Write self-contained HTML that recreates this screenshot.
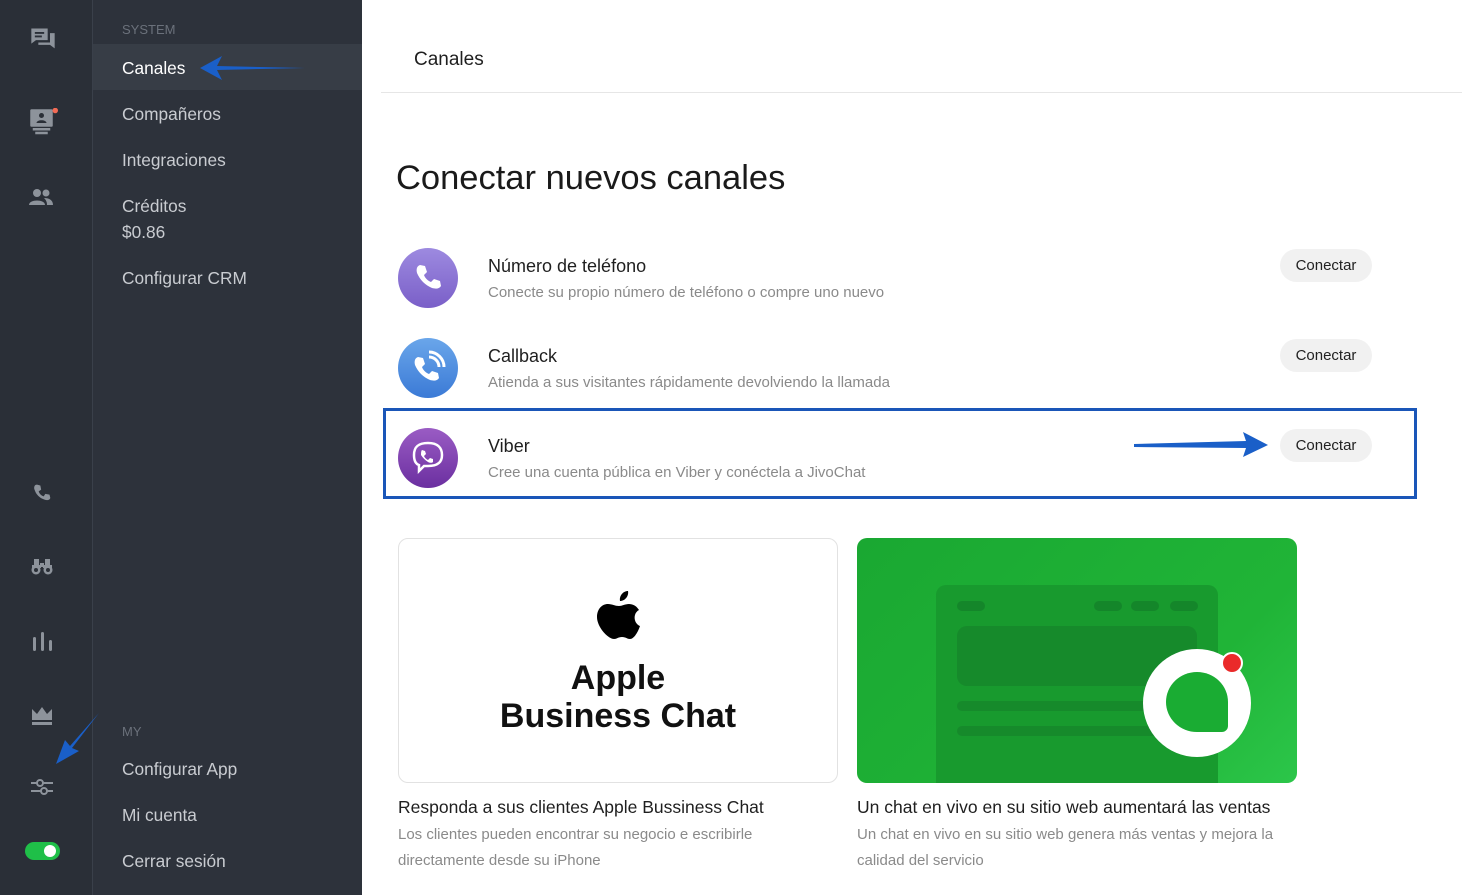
<!DOCTYPE html>
<html><head><meta charset="utf-8"><style>
*{margin:0;padding:0;box-sizing:border-box}
body{width:1462px;height:895px;overflow:hidden;font-family:"Liberation Sans",sans-serif;background:#fff;position:relative}
.rail{position:absolute;left:0;top:0;width:92px;height:895px;background:#2a2f37}
.menu{position:absolute;left:92px;top:0;width:270px;height:895px;background:#2d323b;border-left:1px solid #3a404a}
.menu .it{position:absolute;left:29px;color:#c9ccd1;font-size:17.3px}
.menu .sec{position:absolute;left:29px;color:#6b717b;font-size:13px}
.act{position:absolute;left:0;top:44px;width:269px;height:46px;background:#373d46}
.ic{position:absolute;left:29px}
.a{position:absolute;font-size:18px;color:#1f1f1f}
.s{position:absolute;font-size:15px;color:#8a8a8a}
.btn{position:absolute;left:1280px;width:92px;height:33px;border-radius:17px;background:#f1f1f1;font-size:15px;color:#222;text-align:center;line-height:33px}
.circ{position:absolute;left:398px;width:60px;height:60px;border-radius:50%}
</style></head><body>
<div class="rail">
<svg class="ic" style="top:25px" width="28" height="28" viewBox="0 0 24 24" fill="#8d939b"><path d="M2 3h14v10H6l-4 3z"/><path d="M18 7h4v13l-4-3H8v-2h10z"/><rect x="5" y="6" width="8" height="1.6" fill="#2a2f37"/><rect x="5" y="9" width="6" height="1.6" fill="#2a2f37"/></svg>
<svg class="ic" style="top:108px" width="30" height="30" viewBox="0 0 24 24"><rect x="1" y="1" width="18" height="14" rx="1" fill="#8d939b"/><circle cx="10" cy="6" r="2" fill="#2a2f37"/><path d="M6 12c0-3 8-3 8 0z" fill="#2a2f37"/><rect x="3" y="16" width="14" height="2" fill="#8d939b"/><rect x="5" y="19" width="10" height="2" fill="#8d939b"/><circle cx="21" cy="2" r="2.2" fill="#f26b55"/></svg>
<svg class="ic" style="top:188px" width="24" height="20" viewBox="0 0 24 20" fill="#8d939b"><circle cx="8" cy="5" r="4"/><circle cx="17" cy="5" r="3.5"/><path d="M0 17c0-6 16-6 16 0z"/><path d="M15 10c5 0 9 2 9 7h-6c0-3-1-5-3-7z"/></svg>
<svg class="ic" style="top:483px;left:32px" width="20" height="20" viewBox="0 0 24 24" fill="#8d939b"><path d="M6 2l4 1 1 5-3 2c1 3 3 5 6 6l2-3 5 1 1 4c-1 3-4 3-7 2C9 18 5 14 3 8 2 5 3 2 6 2z"/></svg>
<svg class="ic" style="top:557px;left:31px" width="22" height="18" viewBox="0 0 22 18" fill="#8d939b"><path d="M3 2h5v6H3zM14 2h5v6h-5zM1 8h9v3H1zM12 8h9v3h-9z"/><circle cx="5" cy="13" r="4.5"/><circle cx="17" cy="13" r="4.5"/><circle cx="5" cy="13" r="2" fill="#2a2f37"/><circle cx="17" cy="13" r="2" fill="#2a2f37"/><rect x="9" y="6" width="4" height="4"/></svg>
<svg class="ic" style="top:632px;left:32px" width="22" height="20" fill="#8d939b"><rect x="1" y="5" width="3" height="14" rx="1.5"/><rect x="9" y="0" width="3" height="19" rx="1.5"/><rect x="17" y="8" width="3" height="11" rx="1.5"/></svg>
<svg class="ic" style="top:707px;left:32px" width="20" height="18" fill="#8d939b"><path d="M0 2l5 5 5-7 5 7 5-5v11H0z"/><rect y="15" width="20" height="3"/></svg>
<svg class="ic" style="top:777px;left:31px" width="22" height="20" fill="none" stroke="#8d939b" stroke-width="2"><path d="M0 6h6M12 6h10M0 14h10M16 14h6"/><circle cx="9" cy="6" r="3"/><circle cx="13" cy="14" r="3"/></svg>
<div style="position:absolute;left:25px;top:842px;width:35px;height:18px;border-radius:9px;background:#1fbf48"></div>
<div style="position:absolute;left:44px;top:845px;width:12px;height:12px;border-radius:50%;background:#fff"></div>
</div>
<div class="menu">
<div class="sec" style="top:22px">SYSTEM</div>
<div class="act"></div>
<div class="it" style="top:58px;color:#fff">Canales</div>
<div class="it" style="top:104px">Compañeros</div>
<div class="it" style="top:150px">Integraciones</div>
<div class="it" style="top:196px">Créditos</div>
<div class="it" style="top:222px">$0.86</div>
<div class="it" style="top:268px">Configurar CRM</div>
<div class="sec" style="top:724px">MY</div>
<div class="it" style="top:759px">Configurar App</div>
<div class="it" style="top:805px">Mi cuenta</div>
<div class="it" style="top:851px">Cerrar sesión</div>
</div>
<svg style="position:absolute;left:0;top:0" width="1462" height="895"><path d="M200 68l22-12-5 10 88 2-88 2 5 10z" fill="#1a5fc8"/><path d="M99 713L72 748l7 3-23 13 9-24 5 6z" fill="#1a5fc8"/><path d="M1134 444l112-3-3-9 25 13-25 12 3-9-112-1z" fill="#1a5fc8"/></svg>
<div style="position:absolute;left:414px;top:49px;font-size:19px;color:#1f1f1f">Canales</div>
<div style="position:absolute;left:381px;top:92px;width:1081px;height:1px;background:#e6e6e6"></div>
<div style="position:absolute;left:396px;top:159px;font-size:34.5px;color:#1a1a1a">Conectar nuevos canales</div>
<div class="circ" style="top:248px;background:linear-gradient(#9d8ae0,#7a5fc8)"><svg width="60" height="60" viewBox="0 0 60 60" fill="#fff"><path d="M22 17l5 1 2 6-3 3c1 3 4 6 7 7l3-3 6 2 1 5c-2 3-5 3-9 2-7-3-12-8-15-15-1-4 0-7 3-8z"/></svg></div>
<div class="circ" style="top:338px;background:linear-gradient(#6aa6ea,#3b7ad6)"><svg width="60" height="60" viewBox="0 0 60 60" fill="#fff"><path d="M20 19l5 1 2 6-3 3c1 3 4 6 7 7l3-3 6 2 1 5c-2 3-5 3-9 2-7-3-12-8-15-15-1-4 0-7 3-8z"/><path d="M31 19a10 10 0 0 1 10 10M31 14a15 15 0 0 1 15 15" stroke="#fff" stroke-width="3" fill="none"/></svg></div>
<div class="circ" style="top:428px;background:linear-gradient(#9a5cc4,#6b2fa0)"><svg width="60" height="60" viewBox="0 0 60 60" fill="none" stroke="#fff" stroke-width="2.5"><path d="M30 15c-10 0-14 4-14 12 0 6 2 9 5 10v6l5-5h4c10 0 14-4 14-11s-4-12-14-12z"/><path d="M24 22l3 1 1 3-2 2c1 2 2 3 4 4l2-2 3 1v3c-1 1-3 1-5 0-3-2-5-4-7-7 0-2 0-4 1-5z" fill="#fff" stroke="none"/></svg></div>
<div class="a" style="left:488px;top:256px">Número de teléfono</div>
<div class="s" style="left:488px;top:284px">Conecte su propio número de teléfono o compre uno nuevo</div>
<div class="a" style="left:488px;top:346px">Callback</div>
<div class="s" style="left:488px;top:374px">Atienda a sus visitantes rápidamente devolviendo la llamada</div>
<div class="a" style="left:488px;top:436px">Viber</div>
<div class="s" style="left:488px;top:464px">Cree una cuenta pública en Viber y conéctela a JivoChat</div>
<div class="btn" style="top:249px">Conectar</div>
<div class="btn" style="top:339px">Conectar</div>
<div class="btn" style="top:429px">Conectar</div>
<div style="position:absolute;left:383px;top:408px;width:1034px;height:91px;border:3px solid #1a56b8"></div>
<div style="position:absolute;left:398px;top:538px;width:440px;height:245px;border:1px solid #e2e2e2;border-radius:10px;text-align:center">
<svg style="position:absolute;left:196px;top:52px" width="48" height="56" viewBox="0 0 48 56" fill="#000"><path d="M33 0c1 5-3 10-8 10-1-5 3-10 8-10z"/><path d="M24 15c3 0 6-2 10-2 5 0 8 3 10 6-6 3-6 13 1 16-2 6-6 13-10 13-3 0-4-2-8-2s-5 2-8 2C13 48 2 36 2 26c0-8 5-13 11-13 4 0 7 2 11 2z"/></svg>
<div style="position:absolute;left:0;right:0;top:120px;font-size:34px;font-weight:bold;line-height:38px;color:#111">Apple<br>Business Chat</div>
</div>
<div style="position:absolute;left:857px;top:538px;width:440px;height:245px;border-radius:10px;background:linear-gradient(135deg,#1aa832,#20b437 70%,#2cc64a);overflow:hidden">
<div style="position:absolute;left:79px;top:47px;width:282px;height:210px;border-radius:10px;background:#189a2e"></div>
<div style="position:absolute;left:100px;top:63px;width:28px;height:10px;border-radius:5px;background:#14862a"></div>
<div style="position:absolute;left:237px;top:63px;width:28px;height:10px;border-radius:5px;background:#14862a"></div>
<div style="position:absolute;left:274px;top:63px;width:28px;height:10px;border-radius:5px;background:#14862a"></div>
<div style="position:absolute;left:313px;top:63px;width:28px;height:10px;border-radius:5px;background:#14862a"></div>
<div style="position:absolute;left:100px;top:88px;width:240px;height:60px;border-radius:10px;background:#168a2b"></div>
<div style="position:absolute;left:100px;top:163px;width:200px;height:10px;border-radius:5px;background:#168a2b"></div>
<div style="position:absolute;left:100px;top:188px;width:200px;height:10px;border-radius:5px;background:#168a2b"></div>
<div style="position:absolute;left:286px;top:111px;width:108px;height:108px;border-radius:50%;background:#fff"></div>
<div style="position:absolute;left:309px;top:134px;width:62px;height:60px;border-radius:50% 50% 10% 50%;background:#1aac33"></div>
<div style="position:absolute;left:364px;top:114px;width:22px;height:22px;border-radius:50%;background:#ea2a2a;border:2px solid #fff"></div>
</div>
<div class="a" style="left:398px;top:797px;font-size:17.5px">Responda a sus clientes Apple Bussiness Chat</div>
<div class="s" style="left:398px;top:822px;line-height:26px">Los clientes pueden encontrar su negocio e escribirle<br>directamente desde su iPhone</div>
<div class="a" style="left:857px;top:797px;font-size:17.5px">Un chat en vivo en su sitio web aumentará las ventas</div>
<div class="s" style="left:857px;top:822px;line-height:26px">Un chat en vivo en su sitio web genera más ventas y mejora la<br>calidad del servicio</div>
</body></html>
